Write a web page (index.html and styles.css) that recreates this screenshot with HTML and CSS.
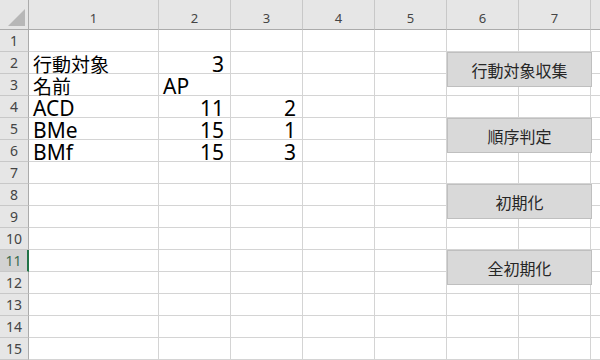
FILE: index.html
```html
<!DOCTYPE html>
<html lang="ja">

<head>
    <meta charset="UTF-8">
    <title>Sheet1</title>
    <link rel="stylesheet" href="styles.css">
</head>

<body>
    <div class="sheet">
        <div class="grid">
            <!-- 列見出し -->
            <div class="corner"><span class="tri"></span></div>
            <div class="col-head">1</div>
            <div class="col-head">2</div>
            <div class="col-head">3</div>
            <div class="col-head">4</div>
            <div class="col-head">5</div>
            <div class="col-head">6</div>
            <div class="col-head">7</div>
            <div class="col-head"></div>

            <div class="row-head">1</div>
            <div class="cell"></div><div class="cell"></div><div class="cell"></div><div class="cell"></div><div class="cell"></div><div class="cell"></div><div class="cell"></div><div class="cell"></div>

            <div class="row-head">2</div>
            <div class="cell jp">行動対象</div><div class="cell num">3</div><div class="cell"></div><div class="cell"></div><div class="cell"></div><div class="cell"></div><div class="cell"></div><div class="cell"></div>

            <div class="row-head">3</div>
            <div class="cell jp">名前</div><div class="cell">AP</div><div class="cell"></div><div class="cell"></div><div class="cell"></div><div class="cell"></div><div class="cell"></div><div class="cell"></div>

            <div class="row-head">4</div>
            <div class="cell">ACD</div><div class="cell num">11</div><div class="cell num">2</div><div class="cell"></div><div class="cell"></div><div class="cell"></div><div class="cell"></div><div class="cell"></div>

            <div class="row-head">5</div>
            <div class="cell">BMe</div><div class="cell num">15</div><div class="cell num">1</div><div class="cell"></div><div class="cell"></div><div class="cell"></div><div class="cell"></div><div class="cell"></div>

            <div class="row-head">6</div>
            <div class="cell">BMf</div><div class="cell num">15</div><div class="cell num">3</div><div class="cell"></div><div class="cell"></div><div class="cell"></div><div class="cell"></div><div class="cell"></div>

            <div class="row-head">7</div>
            <div class="cell"></div><div class="cell"></div><div class="cell"></div><div class="cell"></div><div class="cell"></div><div class="cell"></div><div class="cell"></div><div class="cell"></div>

            <div class="row-head">8</div>
            <div class="cell"></div><div class="cell"></div><div class="cell"></div><div class="cell"></div><div class="cell"></div><div class="cell"></div><div class="cell"></div><div class="cell"></div>

            <div class="row-head">9</div>
            <div class="cell"></div><div class="cell"></div><div class="cell"></div><div class="cell"></div><div class="cell"></div><div class="cell"></div><div class="cell"></div><div class="cell"></div>

            <div class="row-head">10</div>
            <div class="cell"></div><div class="cell"></div><div class="cell"></div><div class="cell"></div><div class="cell"></div><div class="cell"></div><div class="cell"></div><div class="cell"></div>

            <div class="row-head active">11</div>
            <div class="cell"></div><div class="cell"></div><div class="cell"></div><div class="cell"></div><div class="cell"></div><div class="cell"></div><div class="cell"></div><div class="cell"></div>

            <div class="row-head">12</div>
            <div class="cell"></div><div class="cell"></div><div class="cell"></div><div class="cell"></div><div class="cell"></div><div class="cell"></div><div class="cell"></div><div class="cell"></div>

            <div class="row-head">13</div>
            <div class="cell"></div><div class="cell"></div><div class="cell"></div><div class="cell"></div><div class="cell"></div><div class="cell"></div><div class="cell"></div><div class="cell"></div>

            <div class="row-head">14</div>
            <div class="cell"></div><div class="cell"></div><div class="cell"></div><div class="cell"></div><div class="cell"></div><div class="cell"></div><div class="cell"></div><div class="cell"></div>

            <div class="row-head">15</div>
            <div class="cell"></div><div class="cell"></div><div class="cell"></div><div class="cell"></div><div class="cell"></div><div class="cell"></div><div class="cell"></div><div class="cell"></div>
        </div>

        <!-- シート上のボタン -->
        <button class="macro-btn btn-collect">行動対象収集</button>
        <button class="macro-btn btn-order">順序判定</button>
        <button class="macro-btn btn-init">初期化</button>
        <button class="macro-btn btn-reset">全初期化</button>
    </div>
</body>

</html>
```

FILE: styles.css
```css
body {
    margin: 0;
    background: #fff;
    font-family: "Noto Sans", "Noto Sans CJK JP", sans-serif;
    overflow: hidden;
}

.sheet {
    position: relative;
    width: 600px;
    height: 360px;
    overflow: hidden;
}

.grid {
    display: grid;
    grid-template-columns: 29px 130px repeat(6, 72px) 1fr;
    grid-template-rows: 30px repeat(15, 22px);
}

.grid > div {
    box-sizing: border-box;
}

.corner {
    position: relative;
    background: #e6e6e6;
    border-right: 1px solid #ababab;
    border-bottom: 1px solid #ababab;
}

.corner .tri {
    position: absolute;
    right: 3px;
    bottom: 3px;
    width: 0;
    height: 0;
    border-left: 17px solid transparent;
    border-bottom: 17px solid #b7b7b7;
}

.col-head {
    background: #e6e6e6;
    border-right: 1px solid #c8c8c8;
    border-bottom: 1px solid #ababab;
    color: #444;
    font-size: 13px;
    text-align: center;
    line-height: 36px;
}

.row-head {
    background: #e6e6e6;
    border-right: 1px solid #ababab;
    border-bottom: 1px solid #c8c8c8;
    color: #444;
    font-size: 14px;
    text-align: center;
    line-height: 21px;
}

.row-head.active {
    background: #d2d2d2;
    color: #3c6e50;
    border-right: 2px solid #217346;
}

.cell {
    border-right: 1px solid #d4d4d4;
    border-bottom: 1px solid #d4d4d4;
    font-size: 21px;
    line-height: 17px;
    padding: 4px 5px 0 4px;
    color: #000;
    white-space: nowrap;
}

.cell.jp {
    font-size: 19px;
    padding-top: 5px;
}

.cell.num {
    text-align: right;
    padding-right: 6px;
}

.macro-btn {
    position: absolute;
    left: 447px;
    width: 145px;
    height: 35px;
    margin: 0;
    padding: 0;
    background: #d9d9d9;
    border: 1px solid #bfbfbf;
    color: #262626;
    font-family: "Noto Sans CJK JP", sans-serif;
    font-size: 16px;
}

.btn-collect {
    top: 52px;
}

.btn-order {
    top: 118px;
}

.btn-init {
    top: 184px;
}

.btn-reset {
    top: 250px;
}
```
